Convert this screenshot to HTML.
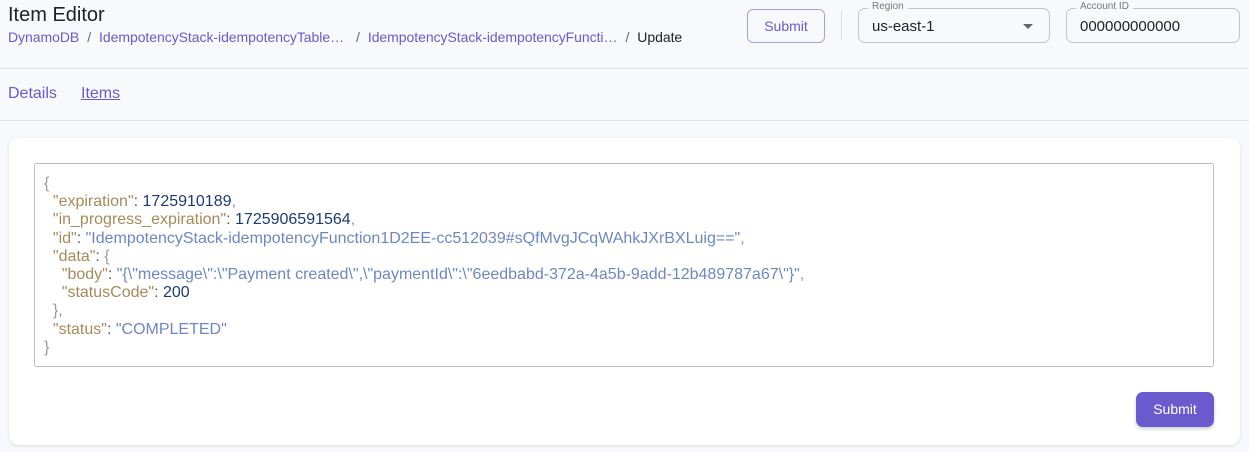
<!DOCTYPE html>
<html><head><style>
body{margin:0;width:1249px;height:452px;background:#f8f9fc;font-family:"Liberation Sans",sans-serif;position:relative;overflow:hidden}
.a{position:absolute}
.title{left:8px;top:4px;font-size:20px;color:#222}
.bc{left:8px;top:29px;font-size:14px;color:#222;white-space:nowrap;letter-spacing:-0.05px}
.bc span.l{color:#6a5acd}
.bc .s{color:#666;margin:0 8px}
.hr{left:0;width:1249px;height:1px;background:#e3e4e8}
.btn1{left:747px;top:9px;width:76px;height:32px;border:1px solid #a9a0e0;border-radius:6px;color:#6a5acd;font-size:14px;text-align:center;line-height:32px}
.vsep{left:841px;top:10px;width:1px;height:30px;background:#ddd}
.fld{border:1px solid #c4c4c4;border-radius:7px;height:35px;top:8px;font-size:15px;color:#222;line-height:35px;padding-left:13px;box-sizing:border-box}
.lab{top:-8px;left:9px;font-size:10px;color:#777;background:#f8f9fc;padding:0 4px;line-height:12px;position:absolute}
.tabs{top:85px;font-size:16px;color:#6a5acd}
.card{left:9px;top:138px;width:1231px;height:307px;background:#fff;border-radius:10px;box-shadow:0 1px 3px rgba(0,0,0,.12)}
.ta{left:34px;top:163px;width:1180px;height:204px;border:1px solid #bbb;border-radius:3px;box-sizing:border-box;background:#fff}
pre{margin:0;position:absolute;left:44px;top:175px;font-family:"Liberation Sans",sans-serif;font-size:16px;line-height:18.2px;color:#555;letter-spacing:0}
.k{color:#a68a5a}.n{color:#1c3a7a}.s2{color:#6f86c4}.p{color:#999}
.btn2{left:1136px;top:392px;width:78px;height:35px;background:#6a5acd;border-radius:7px;color:#fff;font-size:14px;text-align:center;line-height:35px;box-shadow:0 2px 3px rgba(0,0,0,.2)}
</style></head><body>
<div class="a title">Item Editor</div>
<div class="a bc"><span class="l">DynamoDB</span><span class="s">/</span><span class="l">IdempotencyStack-idempotencyTable…</span><span class="s" style="margin-left:12px">/</span><span class="l">IdempotencyStack-idempotencyFuncti…</span><span class="s">/</span>Update</div>
<div class="a btn1">Submit</div>
<div class="a vsep"></div>
<div class="a fld" style="left:858px;width:192px"><span class="lab">Region</span>us-east-1<span style="position:absolute;right:16px;top:15px;width:0;height:0;border-left:5px solid transparent;border-right:5px solid transparent;border-top:5px solid #666"></span></div>
<div class="a fld" style="left:1066px;width:174px"><span class="lab">Account ID</span>000000000000</div>
<div class="a hr" style="top:68px"></div>
<div class="a tabs" style="left:8px">Details</div>
<div class="a tabs" style="left:81px;text-decoration:underline">Items</div>
<div class="a hr" style="top:120px"></div>
<div class="a card"></div>
<div class="a ta"></div>
<pre><span class="p">{</span>
  <span class="k">"expiration"</span>: <span class="n">1725910189</span><span class="p">,</span>
  <span class="k">"in_progress_expiration"</span>: <span class="n">1725906591564</span><span class="p">,</span>
  <span class="k">"id"</span>: <span class="s2">"IdempotencyStack-idempotencyFunction1D2EE-cc512039#sQfMvgJCqWAhkJXrBXLuig=="</span><span class="p">,</span>
  <span class="k">"data"</span>: <span class="p">{</span>
    <span class="k">"body"</span>: <span class="s2">"{\"message\":\"Payment created\",\"paymentId\":\"6eedbabd-372a-4a5b-9add-12b489787a67\"}"</span><span class="p">,</span>
    <span class="k">"statusCode"</span>: <span class="n">200</span>
  <span class="p">},</span>
  <span class="k">"status"</span>: <span class="s2">"COMPLETED"</span>
<span class="p">}</span></pre>
<div class="a btn2">Submit</div>
</body></html>
